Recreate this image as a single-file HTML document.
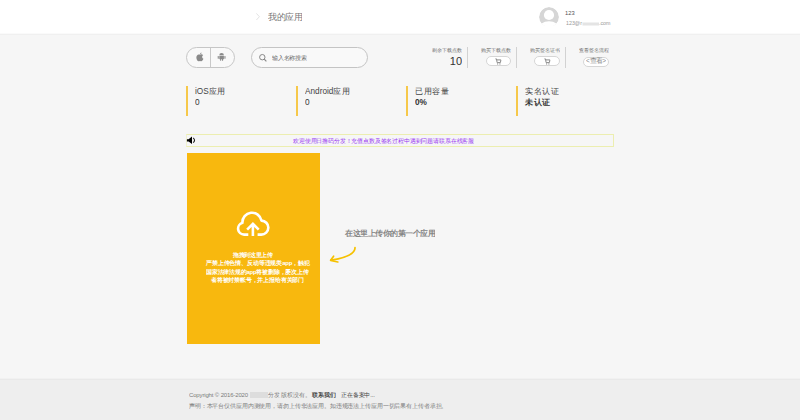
<!DOCTYPE html>
<html><head><meta charset="utf-8">
<style>
*{margin:0;padding:0;box-sizing:border-box}
html,body{width:800px;height:420px;overflow:hidden}
body{background:#f6f6f6;font-family:"Liberation Sans",sans-serif;position:relative;color:#333}
.abs{position:absolute;white-space:nowrap}
.t{transform:scale(.5);transform-origin:0 0}
.tr{transform:scale(.5);transform-origin:100% 0;text-align:right}
.tc{transform:scale(.5);transform-origin:50% 0;text-align:center}
.j{text-align:justify;text-align-last:justify}
#hdr{position:absolute;left:0;top:0;width:800px;height:33px;background:#fff;box-shadow:0 1px 0 #fafafa,0 2px 0 #f0f0f0}
#footer{position:absolute;left:0;top:379px;width:800px;height:41px;background:#eeeeee;border-top:1px solid #e9e9e9;box-shadow:0 -1px 0 #f1f1f1}
.pill{position:absolute;left:186px;top:47px;width:49px;height:21px;border:1px solid #c6c6c6;border-radius:11px;background:#f9f9f9}
.pill .div{position:absolute;left:23px;top:0;width:1px;height:19px;background:#c9c9c9}
.search{position:absolute;left:251px;top:46.8px;width:116.8px;height:21px;border:1px solid #c4c4c4;border-radius:11px;background:#f9f9f9}
.lbl{font-size:10px;line-height:16px;color:#6e6e6e;width:60px}
.btn{position:absolute;height:10px;border:1px solid #d6d6d6;border-radius:5px;background:#fff}
.vdiv{position:absolute;top:47px;width:1px;height:20.5px;background:#d2d2d2}
.bar{position:absolute;top:86px;width:2px;height:30px;background:#f6c84a}
.st1{font-size:16.5px;line-height:22px;color:#444}
.st2{font-size:16.5px;line-height:22px;color:#333}
.marq{position:absolute;left:186px;top:134px;width:428px;height:13px;border:1px solid #eceeb0;border-left-color:#f0f1d0}
.card{position:absolute;left:186.5px;top:153px;width:133.7px;height:191.2px;background:#f8b80e}
.ctext{position:absolute;left:120.25px;width:267px;text-align:center;color:#fff;font-size:11.6px;line-height:16.6px;white-space:nowrap}
</style></head><body>
<div id="hdr"></div>
<svg class="abs" style="left:254px;top:12px" width="8" height="10" viewBox="0 0 8 10"><path d="M2.4 1.4 L5.4 4.7 L2.4 8" fill="none" stroke="#e0e0e0" stroke-width="0.9"/></svg>
<div class="abs t j" style="left:268px;width:68px;top:11.5px;font-size:17px;line-height:22px;color:#777">我的应用</div>

<svg class="abs" style="left:538px;top:6px" width="22" height="20" viewBox="0 0 22 20">
<defs><clipPath id="ac"><circle cx="11" cy="11" r="10"/></clipPath></defs>
<g clip-path="url(#ac)">
<circle cx="11" cy="11" r="10" fill="#d6d6d6"/>
<circle cx="11" cy="9" r="5.1" fill="#fff"/>
<ellipse cx="11" cy="23.2" rx="10.5" ry="8" fill="#fff"/>
</g>
</svg>
<div class="abs t" style="left:565px;top:9px;font-size:11.6px;line-height:16px;color:#555">123</div>
<div class="abs t" style="left:566px;top:19px;font-size:10.6px;line-height:16px;color:#999">123@r<span style="display:inline-block;width:33px;height:6px;background:#e4e4e4;vertical-align:-1px;margin:0 0 0 1px"></span>.com</div>

<div class="pill"><div class="div"></div>
<svg class="abs" style="left:7.6px;top:4px" width="10" height="10" viewBox="0 0 10 10"><path d="M5 2.6C5.6 2.6 6.2 2.2 6.6 2.4C7.3 2.6 7.6 3.0 7.8 3.3C7.1 3.7 6.9 4.2 6.9 4.9C6.9 5.7 7.4 6.2 8 6.4C7.7 7.3 7.1 8.4 6.3 8.5C5.8 8.5 5.6 8.2 5 8.2C4.4 8.2 4.1 8.5 3.7 8.5C2.9 8.5 1.9 6.9 1.8 5.4C1.7 3.7 2.8 2.5 3.8 2.5C4.3 2.5 4.6 2.6 5 2.6ZM5.1 2.3C5.1 1.6 5.6 1 6.3 0.9C6.4 1.7 5.8 2.3 5.1 2.3Z" fill="#8a8a8a" transform="translate(5 5) scale(1.14) translate(-5 -4.8)"/></svg>
<svg class="abs" style="left:30px;top:3px" width="10" height="11" viewBox="0 0 10 11"><path d="M2.3 4.3A2.3 2.3 0 0 1 6.9 4.3Z" fill="#8a8a8a"/><rect x="2.3" y="4.8" width="4.6" height="3.4" fill="#8a8a8a"/><rect x="0.7" y="4.9" width="1.1" height="2.9" rx="0.55" fill="#8a8a8a"/><rect x="7.4" y="4.9" width="1.1" height="2.9" rx="0.55" fill="#8a8a8a"/><rect x="3.1" y="7.6" width="1.1" height="2.2" rx="0.5" fill="#8a8a8a"/><rect x="5" y="7.6" width="1.1" height="2.2" rx="0.5" fill="#8a8a8a"/></svg>
</div>

<div class="search">
<svg class="abs" style="left:6px;top:5px" width="10" height="10" viewBox="0 0 10 10"><circle cx="4.3" cy="4.2" r="2.7" fill="none" stroke="#888" stroke-width="1"/><path d="M6.2 6.1L8.4 8.3" stroke="#888" stroke-width="1.2"/></svg>
</div>
<div class="abs t j" style="left:272.4px;width:69.2px;top:53.5px;font-size:12px;letter-spacing:-0.45px;line-height:16px;color:#6a6a6a">输入名称搜索</div>

<!-- right stats -->
<div class="abs t j lbl" style="left:432px;top:46px">剩余下载点数</div>
<div class="abs tr" style="left:400px;top:54.4px;width:62px;font-size:22px;line-height:28px;color:#333">10</div>
<div class="vdiv" style="left:467px"></div>
<div class="abs t j lbl" style="left:481px;top:46px">购买下载点数</div>
<div class="btn" style="left:485.6px;top:56.2px;width:25.6px"></div>
<div class="vdiv" style="left:516px"></div>
<div class="abs t j lbl" style="left:530px;top:46px">购买签名证书</div>
<div class="btn" style="left:534.4px;top:56.2px;width:25.6px"></div>
<div class="vdiv" style="left:565px"></div>
<div class="abs t j lbl" style="left:579px;top:46px">查看签名流程</div>
<div class="btn" style="left:583.2px;top:56.6px;width:25.6px"></div>
<svg class="abs" style="left:495.4px;top:57.6px" width="7" height="7" viewBox="0 0 7 7"><path d="M0.4 0.9H1.5L2.1 4.6H5.4L5.9 1.9H1.8" fill="none" stroke="#8c8c8c" stroke-width="1"/><circle cx="2.6" cy="5.9" r="0.65" fill="#8c8c8c"/><circle cx="4.9" cy="5.9" r="0.65" fill="#8c8c8c"/></svg>
<svg class="abs" style="left:544.4px;top:57.6px" width="7" height="7" viewBox="0 0 7 7"><path d="M0.4 0.9H1.5L2.1 4.6H5.4L5.9 1.9H1.8" fill="none" stroke="#8c8c8c" stroke-width="1"/><circle cx="2.6" cy="5.9" r="0.65" fill="#8c8c8c"/><circle cx="4.9" cy="5.9" r="0.65" fill="#8c8c8c"/></svg>
<div class="abs t j" style="left:586px;top:57px;width:40px;font-size:13px;letter-spacing:-0.3px;line-height:16px;color:#888">&lt;查看&gt;</div>

<!-- stat blocks -->
<div class="bar" style="left:186px"></div>
<div class="abs t j st1" style="left:195px;top:85px;width:61.6px">iOS应用</div>
<div class="abs t st2" style="left:195px;top:96px">0</div>
<div class="bar" style="left:296px"></div>
<div class="abs t j st1" style="left:305px;top:85px;width:90.8px">Android应用</div>
<div class="abs t st2" style="left:305px;top:96px">0</div>
<div class="bar" style="left:406px"></div>
<div class="abs t j st1" style="left:415px;top:85px;width:68px">已用容量</div>
<div class="abs t st2" style="left:415px;top:96px;font-weight:bold">0%</div>
<div class="bar" style="left:516px"></div>
<div class="abs t j st1" style="left:525px;top:85px;width:68px">实名认证</div>
<div class="abs t j st2" style="left:525px;top:96px;width:51px;font-weight:bold">未认证</div>

<!-- marquee -->
<div class="marq"></div>
<svg class="abs" style="left:184px;top:133px" width="14" height="14" viewBox="184 133 14 14"><path d="M186.9 139.2H188.6L192 136.5V144.1L188.6 141.4H186.9Z" fill="#000"/><path d="M193.2 137.9Q195.9 140.3 193.2 142.7" fill="none" stroke="#222" stroke-width="1.1"/></svg>
<div class="abs t j" style="left:293px;width:362px;top:136.5px;font-size:12px;letter-spacing:-0.32px;line-height:16px;color:#9836f2">欢迎使用日撸码分发！充值点数及签名过程中遇到问题请联系在线客服</div>

<!-- card -->
<div class="card"></div>
<svg class="abs" style="left:230px;top:205px" width="46" height="36" viewBox="230 205 46 36">
<path d="M248.3 234.6H244.1A6 6 0 0 1 242.42 222.84A9.6 9.6 0 0 1 261.45 220.6A7 7 0 0 1 261.2 234.6H257.6" fill="none" stroke="#fff" stroke-width="2.6" stroke-linejoin="round"/>
<path d="M252.9 236V223.6M247.1 229.6L252.9 223.8L258.7 229.6" fill="none" stroke="#fff" stroke-width="2.6"/>
</svg>
<div class="abs t j" style="left:233px;width:79.2px;top:251px;font-size:12px;letter-spacing:-0.7px;line-height:16.6px;color:#fff;font-weight:bold">拖拽到这里上传</div>
<div class="abs t j" style="left:205.9px;top:259.3px;width:207.6px;font-size:12px;letter-spacing:-0.45px;line-height:16.6px;color:#fff;font-weight:bold">严禁上传色情、反动等违规类app，触犯</div>
<div class="abs t j" style="left:205.9px;top:267.6px;width:205px;font-size:12px;letter-spacing:-0.45px;line-height:16.6px;color:#fff;font-weight:bold">国家法律法规的app将被删除，屡次上传</div>
<div class="abs t j" style="left:211.4px;top:275.9px;width:185.8px;font-size:12px;letter-spacing:-0.45px;line-height:16.6px;color:#fff;font-weight:bold">者将被封禁帐号，并上报给有关部门</div>

<div class="abs t j" style="left:345px;width:180px;top:228px;font-size:15px;line-height:20px;color:#848484;font-weight:bold">在这里上传你的第一个应用</div>
<svg class="abs" style="left:325px;top:243px" width="35" height="22" viewBox="325 243 35 22">
<path d="M355 247.6C355.5 253.5 347 257.6 331 260.2" fill="none" stroke="#f6c100" stroke-width="1.7" stroke-linecap="round"/>
<path d="M333.6 256.2L330.6 260.3L337.8 262" fill="none" stroke="#f6c100" stroke-width="1.7" stroke-linecap="round" stroke-linejoin="round"/>
</svg>

<div id="footer"></div>
<div class="abs t" style="left:189px;top:390.5px;font-size:12px;letter-spacing:-0.3px;line-height:16px;color:#7c7c7c">Copyright © 2016-2020</div>
<div class="abs" style="left:250.25px;top:391.5px;width:17.5px;height:6px;background:#dddddd"></div>
<div class="abs t j" style="left:267.75px;top:390.5px;width:85px;font-size:12px;letter-spacing:-0.3px;line-height:16px;color:#7c7c7c">分发 版权没有。</div>
<div class="abs t j" style="left:312.43px;top:390.5px;width:46.8px;font-size:12px;letter-spacing:-0.3px;line-height:16px;color:#444;font-weight:bold">联系我们</div>
<div class="abs t j" style="left:341.36px;top:390.5px;width:67.6px;font-size:12px;letter-spacing:-0.3px;line-height:16px;color:#444">正在备案中...</div>
<div class="abs t j" style="left:189px;width:516.6px;top:401.5px;font-size:12px;letter-spacing:-0.26px;line-height:16px;color:#7c7c7c">声明：本平台仅供应用内测使用，请勿上传非法应用。如违规违法上传应用一切后果有上传者承担。</div>
</body></html>
